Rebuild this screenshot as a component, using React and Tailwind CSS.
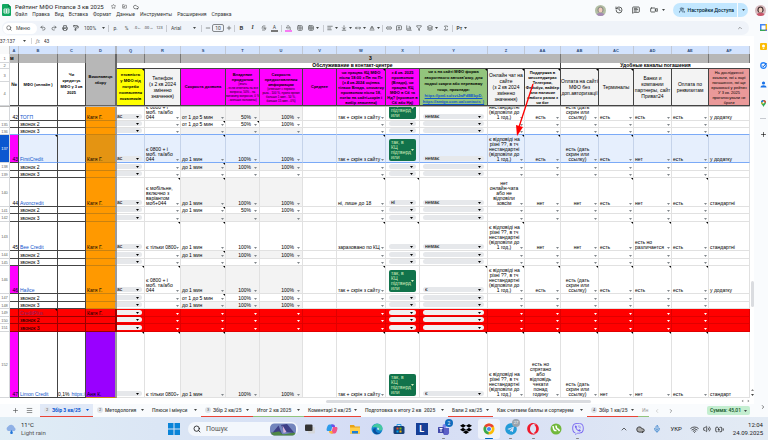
import {
  Undo2, Redo2, Printer, PaintRoller, Search, Star, FolderInput, Cloud, History,
  MessageSquareText, Video, Users, Strikethrough, PaintBucket, Grid2x2, TableCellsMerge,
  AlignLeft, ArrowDownToLine, MoveHorizontal, Baseline, Link2, MessageSquarePlus,
  ChartColumn, Funnel, Layers, Sigma, Minus, Plus, ChevronUp, ChevronLeft, ChevronRight,
  Menu, Mic, Wifi, Volume2, BatteryCharging,
} from "lucide-react";
import { FaDropbox, FaOpera, FaViber, FaTelegram } from "react-icons/fa";

const Caret = ({ className = "text-[#444746]" }) => (
  <svg viewBox="0 0 6 4" aria-hidden="true" className={`h-[2px] w-[3px] shrink-0 ${className}`}>
    <path d="M0 0h6L3 4z" fill="currentColor" />
  </svg>
);

const Note = () => (
  <i className="absolute right-0 top-0 border-l-2 border-t-2 border-l-transparent border-t-black" />
);

/* ---------- document header ---------- */

const menus = ["Файл", "Правка", "Вид", "Вставка", "Формат", "Данные", "Инструменты", "Расширения", "Справка"];

function Avatar({ hair, shirt }) {
  return (
    <svg viewBox="0 0 22 22" className="size-[11px] shrink-0">
      <clipPath id={`av${shirt.slice(1)}`}><circle cx="11" cy="11" r="11" /></clipPath>
      <g clipPath={`url(#av${shirt.slice(1)})`}>
        <rect width="22" height="22" fill={hair === "#8d8b86" ? "#b3bfa4" : "#d6b9bd"} />
        <path d="M5 12C3 0 19 0 17 12l-2 3H7z" fill={hair} />
        <ellipse cx="11" cy="10" rx="4" ry="5" fill="#f0cdbd" />
        <path d="M2 22c1-9 17-9 18 0z" fill={shirt} />
      </g>
    </svg>
  );
}

function DocHeader() {
  return (
    <header className="flex h-5 items-start">
      <svg viewBox="0 0 18 24" className="ml-[2px] mt-1 h-3 w-[9px] shrink-0">
        <path d="M2 0h10l6 6v16a2 2 0 0 1-2 2H2a2 2 0 0 1-2-2V2a2 2 0 0 1 2-2z" fill="#11a861" />
        <path d="M12 0l6 6h-6z" fill="#0b7f48" />
        <path d="M4 10h10v8H4zM4 14h10M9 10v8" fill="none" stroke="#fff" strokeWidth="1.6" />
      </svg>
      <div className="ml-1 mt-[2px]">
        <div className="flex items-center text-[#1f1f1f]">
          <h1 className="whitespace-nowrap text-[6px] leading-[9px]">Рейтинг МФО Finance 3 кв 2025</h1>
          <button aria-label="В избранное" className="ml-[7px]"><Star className="size-[5px]" /></button>
          <button aria-label="Переместить" className="ml-[6px]"><FolderInput className="size-[5px]" /></button>
          <button aria-label="Сохранено" className="ml-[6px]"><Cloud className="size-[6px]" /></button>
        </div>
        <nav className="flex gap-[5px] text-[5px] leading-[7px] text-[#333]">
          {menus.map((m) => <button key={m}>{m}</button>)}
        </nav>
      </div>
      <div className="ml-auto mr-[2px] mt-[3px] flex items-center text-[#444746]">
        <Avatar hair="#8d8b86" shirt="#a58bb5" />
        <button aria-label="История" className="ml-[9px]"><History className="size-2" strokeWidth={2.5} /></button>
        <button aria-label="Комментарии" className="ml-[9px]"><MessageSquareText className="size-2" strokeWidth={2.5} /></button>
        <button aria-label="Встреча" className="ml-[10px] flex items-center gap-[4px]"><Video className="size-2" strokeWidth={2.5} /><Caret /></button>
        <button className="ml-[8px] flex h-[14px] items-center gap-[3px] rounded-l-full bg-[#c2e7ff] pl-[6px] pr-[3px] text-[5px] font-medium text-[#001d35]">
          <Users className="size-[6px]" />
          <span className="whitespace-nowrap">Настройки Доступа</span>
        </button>
        <button aria-label="Ещё" className="ml-px flex h-[14px] w-[10px] items-center justify-center rounded-r-full bg-[#c2e7ff]"><Caret /></button>
        <span className="ml-[7px] flex"><Avatar hair="#3b2a2a" shirt="#c9566a" /></span>
      </div>
    </header>
  );
}

/* ---------- toolbar ---------- */

const Sep = () => <span className="flex w-[3px] shrink-0 justify-center"><i className="h-[7px] w-px bg-[#c7cad0]" /></span>;

function Tool({ icon: Icon, label, w = "w-[11px]", caret, children }) {
  return (
    <button aria-label={label} className={`flex shrink-0 items-center justify-center gap-[2px] ${w}`}>
      {Icon ? <Icon className="size-[6px]" strokeWidth={2.5} /> : children}
      {caret && <Caret />}
    </button>
  );
}

function Toolbar() {
  return (
    <div className="ml-[2px] mr-[5px] mt-px flex h-[14px] items-center rounded-full bg-[#eff3f9] text-[5px] text-[#444746]">
      <button className="ml-px flex h-[11px] w-[34px] shrink-0 items-center gap-[4px] rounded-full bg-white pl-[3px]">
        <Search className="size-[6px]" strokeWidth={2.5} />Меню
      </button>
      <Tool icon={Undo2} label="Отменить" />
      <Tool icon={Redo2} label="Повторить" />
      <Tool icon={Printer} label="Печать" />
      <Tool icon={PaintRoller} label="Копировать формат" />
      <label className="flex w-[26px] shrink-0 items-center pl-[3px]">
        <select aria-label="Масштаб" className="w-[18px] appearance-none"><option>100%</option></select>
        <Caret />
      </label>
      <Sep />
      <Tool label="Денежный">р.</Tool>
      <Tool label="Процент">%</Tool>
      <Tool label="Меньше знаков"><span className="text-[4px]">.0←</span></Tool>
      <Tool label="Больше знаков"><span className="text-[4px]">.00→</span></Tool>
      <Tool label="Форматы"><span className="text-[4px]">123</span></Tool>
      <Sep />
      <label className="flex w-8 shrink-0 items-center pl-[3px]">
        <select aria-label="Шрифт" className="w-[22px] appearance-none"><option>Arial</option></select>
        <Caret />
      </label>
      <Sep />
      <Tool icon={Minus} label="Уменьшить" w="w-[9px]" />
      <input aria-label="Размер шрифта" defaultValue="10" className="h-2 w-3 shrink-0 rounded-[2px] border border-[#85888c] text-center" />
      <Tool icon={Plus} label="Увеличить" w="w-[9px]" />
      <Sep />
      <Tool label="Полужирный"><b className="text-[6px]">B</b></Tool>
      <Tool label="Курсив"><i className="font-serif text-[6px] font-bold">I</i></Tool>
      <Tool icon={Strikethrough} label="Зачеркнутый" />
      <Tool label="Цвет текста"><span className="border-b-2 border-[#777] px-[2px] leading-[5px]">A</span></Tool>
      <Sep />
      <Tool label="Цвет заливки"><span className="border-b-2 border-[#f77cf3] px-px"><PaintBucket className="size-[5px]" /></span></Tool>
      <Tool icon={Grid2x2} label="Границы" />
      <Tool icon={TableCellsMerge} label="Объединить" w="w-[17px]" caret />
      <Sep />
      <Tool icon={AlignLeft} label="По горизонтали" w="w-[14px]" caret />
      <Tool icon={ArrowDownToLine} label="По вертикали" w="w-[14px]" caret />
      <Tool icon={MoveHorizontal} label="Перенос" w="w-[14px]" caret />
      <Tool icon={Baseline} label="Поворот" w="w-[14px]" caret />
      <Sep />
      <Tool icon={Link2} label="Ссылка" w="w-[10px]" />
      <Tool icon={MessageSquarePlus} label="Комментарий" w="w-[10px]" />
      <Tool icon={ChartColumn} label="Диаграмма" w="w-[10px]" />
      <Tool icon={Funnel} label="Фильтр" w="w-[10px]" />
      <Tool icon={Layers} label="Представления" w="w-4" caret />
      <Tool icon={Sigma} label="Функции" />
      <Sep />
      <Tool label="Ввод" w="w-4" caret><b>Рт</b></Tool>
      <button aria-label="Свернуть" className="ml-auto mr-[6px]"><ChevronUp className="size-[6px]" /></button>
    </div>
  );
}

function FormulaBar() {
  return (
    <div className="mt-px flex h-[10px] items-center bg-white text-[5px] text-[#333]">
      <input aria-label="Диапазон" defaultValue="137:137" className="-ml-[3px] w-[26px]" />
      <Caret />
      <i className="ml-[5px] h-[6px] w-px bg-[#d5d7da]" />
      <i className="ml-1 font-serif text-[#888]">fx</i>
      <input aria-label="Формула" defaultValue="43" className="ml-[4px] min-w-0 flex-1" />
    </div>
  );
}

/* ---------- sheet ---------- */

const columns = [
  ["A", "w-[9px]"], ["B", "w-[39px]"], ["C", "w-[28px]"], ["D", "w-[31px]"], ["Q", "w-[28px]"],
  ["R", "w-[36px]"], ["S", "w-[45px]"], ["T", "w-[34px]"], ["U", "w-[43px]"], ["V", "w-[34px]"],
  ["W", "w-[49px]"], ["X", "w-[34px]"], ["Y", "w-[68px]"], ["Z", "w-[37px]"], ["AA", "w-[36px]"],
  ["AB", "w-[38px]"], ["AC", "w-[35px]"], ["AD", "w-[38px]"], ["AE", "w-[37px]"], ["AF", ""],
];

const answer = "є відповіді на\nрізні ??, в тч\nнестандартні\n(відповіли до\n1 год.)";
const yes = "так, в\nКЦ\nпідтверд\nили";
const link = "есть (дать\nскрин или\nссылку)";
const tel = "є 0800 + і\nмоб. та/або\n044";
const withShot = "так + скрін з сайту";

const rows = [
  { n: "", h: "h-[13px]", A: "42", B: "ТОГП", D: "Катя Г.", Q: "ас", R: tel, S: "от 1 до 5 мин", T: "50%", U: "100%", W: withShot, X: "КЦ\nпідтверд\nили", Y: "немає", Z: "нестандартні\n(відповіли до\n1 год.)", AA: "есть", AB: link, AC: "есть", AD: "есть", AE: "есть", AF: "у додатку", gray: 1 },
  { n: "135", h: "h-[6px]", B: "звонок 2", S: "от 1 до 5 мин", T: "50%", U: "100%", notes: "S T" },
  { n: "136", h: "h-[6px]", B: "звонок 3", gray: 1 },
  { n: "137", h: "h-[27px]", A: "43", B: "FirstCredit", D: "Катя Г.", Q: "ас", R: tel, S: "до 1 мин", T: "100%", U: "100%", W: withShot, X: yes, Y: "немає", Z: answer, AA: "есть", AB: link, AC: "есть", AD: "нет", AE: "есть", AF: "у додатку", pink: 1, sel: 1, notes: "B S W Z AA AB AC AE" },
  { n: "138", h: "h-[7px]", B: "звонок 2", S: "до 1 мин", T: "100%", U: "100%", gray: 1, notes: "S" },
  { n: "139", h: "h-[6px]", B: "звонок 3" },
  { n: "140", h: "h-[28px]", A: "44", B: "Avonсredit", D: "Катя Г.", Q: "ас", R: "є мобільне,\nвключно з\nваріантом\nмоб+044", S: "до 1 мин", T: "100%", U: "100%", W: "ні, лише до 18", X: "ні", Y: "немає", Z: "нет\nонлайн-чата\nабо не\nвідповіли\nзовсім", AA: "нет", AB: "нет", AC: "есть", AD: "нет", AE: "есть", AF: "стандартні", gray: 1, notes: "R S W X AC AE" },
  { n: "141", h: "h-[6px]", B: "звонок 2", S: "до 1 мин", T: "50%", U: "100%", notes: "S" },
  { n: "142", h: "h-[7px]", B: "звонок 3", gray: 1 },
  { n: "143", h: "h-[28px]", A: "45", B: "Bee Credit", D: "Катя Г.", Q: "ас", R: "є тільки 0800", S: "до 1 мин", T: "100%", U: "100%", W: "зараховано по КЦ", Y: "немає", Z: answer, AA: "нет", AB: "нет", AC: "есть", AD: "есть но\nразличается", AE: "есть", AF: "стандартні", notes: "R S W X Z AC AD AE" },
  { n: "144", h: "h-[7px]", B: "звонок 2", S: "до 1 мин", T: "100%", U: "100%", gray: 1, notes: "S" },
  { n: "145", h: "h-[6px]", B: "звонок 3" },
  { n: "146", h: "h-[27px]", A: "46", B: "Найсе", D: "Катя Г.", Q: "ас", R: tel, S: "до 1 мин", T: "100%", U: "100%", W: withShot, X: yes, Y: "є", Z: answer, AA: "есть", AB: link, AC: "есть", AD: "есть", AE: "есть", AF: "у додатку", gray: 1, pink: 1, notes: "Q R S W Y Z AA AB AC AD AE" },
  { n: "147", h: "h-[7px]", B: "звонок 2", S: "от 1 до 5 мин", T: "100%", U: "100%", notes: "S" },
  { n: "148", h: "h-[6px]", B: "звонок 3", S: "до 1 мин", T: "100%", U: "100%", gray: 1 },
  { n: "149", h: "h-[7px]", B: "CreditPlus", D: "Катя Г.", red: 1, notes: "B", linked: 1 },
  { n: "150", h: "h-[6px]", B: "звонок 2", red: 1 },
  { n: "151", h: "h-[7px]", B: "звонок 3", red: 1 },
  { n: "152", h: "h-[65px]", A: "47", B: "Limon Credit", C: "0,1%", D: "Аня К.", Q: " ", R: "є тільки 0800", S: "до 1 мин", T: "100%", U: "100%", W: withShot, X: yes, Y: "є", Z: answer, AA: "есть но\nспрятано\nабо\nвідповідь\nчекати\nпонад\nгодину", AB: link, AC: "нет", AD: "нет", AE: "есть", AF: "стандарт", gray: 1, pink: 1, violet: 1, notes: "Q R S W X Y Z AA AB AC AD AE" },
];

const centered = ["Z", "AA", "AB"];
const frozenCols = ["A", "B", "C", "D"];

function fill(row, col) {
  if (row.red) return "bg-[#ff0000]";
  if (col === "A" && row.pink) return "bg-[#ff00ff]";
  if (col === "D") return row.violet ? "bg-[#9900ff]" : row.sel ? "bg-[#e49412]" : "bg-[#ff9900]";
  if (row.sel) return "bg-[#e6effd]";
  if (row.gray && (col === "S" || col === "T" || col === "U")) return "bg-[#f3f3f3]";
  return "bg-white";
}

function Chip({ row, col, value }) {
  if (value.includes("підтверд")) {
    return (
      <button className={`mx-[3px] mb-px flex w-full items-end justify-between bg-[#11734b] px-[2px] pb-px text-left text-[#d4edbc] ${value === yes ? "h-[22px] rounded-[2px]" : "h-3 rounded-b-[2px]"}`}>
        <span className="whitespace-pre">{value}</span>
        <Caret className="-ml-1 mb-[9px] text-[#d4edbc]" />
      </button>
    );
  }
  const bg = row.red ? "bg-[#f1f1f1]" : "bg-[#e6e8eb]";
  return (
    <span className={`mb-px flex h-[5px] w-full items-center pr-[3px] ${bg} ${col === "Q" ? "mr-[2px] rounded-r-full" : "mx-[3px] rounded-full pl-[2px]"}`}>
      <select aria-label={`${col}${row.n}`} className="h-[5px] min-w-0 flex-1 appearance-none leading-[5px]">
        <option>{value}</option>
      </select>
      <Caret className="text-black" />
    </span>
  );
}

function CellBody({ row, col }) {
  const value = row[col] || "";
  if (col === "Q" || col === "X" || col === "Y") return <Chip row={row} col={col} value={value} />;
  if (col === "A") return <span className="w-full text-right">{value}</span>;
  if (col === "B") {
    return row.A || row.linked
      ? <a href="#site" className={`pl-px underline ${row.red ? "text-[#85206a]" : "text-[#1155cc]"}`}>{value}</a>
      : <span className="whitespace-nowrap pl-px">{value}</span>;
  }
  if (col === "C") return value && <span className="flex gap-[2px]">{value}<a href="#rate" className="text-[#1155cc] underline">https://</a></span>;
  if (col === "D" || col === "V" || col === "AF") return <span className="whitespace-nowrap pl-px">{value}</span>;
  const align = centered.includes(col) ? "text-center" : col === "T" || col === "U" ? "text-right" : "text-left";
  return (
    <>
      <span className={`min-w-0 flex-1 whitespace-pre pl-px ${align}`}>{value}</span>
      <button aria-label={`Список ${col}${row.n}`} className={`flex h-[5px] shrink-0 items-center justify-center ${align === "text-right" ? "w-2" : "w-[5px]"}`}>
        <Caret className={row.red ? "text-white" : "text-[#80868b]"} />
      </button>
    </>
  );
}

function SheetRow({ row }) {
  const notes = (row.notes || "").split(" ");
  return (
    <tr>
      <th className={`overflow-hidden border-b border-r border-[#d5d7da] p-0 text-[4px] font-normal leading-[5px] ${row.sel ? "bg-[#0b57d0] text-white" : "bg-white text-[#666]"}`}>{row.n}</th>
      {columns.map(([col]) => {
        const frozen = frozenCols.includes(col);
        let line = "border-[#e1e1e1]";
        if (frozen) line = col === "D" ? "border-b-[#c98210] border-r-[#9a9a9a]" : "border-[#444]";
        if (row.red) line = frozen ? "border-[#900]" : "border-[#e00000]";
        if (row.sel && col !== "A" && col !== "D") line = frozen ? "border-r-[#444] border-b-[#7baaf7]" : "border-r-[#c5d3ea] border-b-[#7baaf7]";
        if (row.n === "136" && col !== "D") line = frozen ? "border-r-[#444] border-b-[#7baaf7]" : "border-r-[#e1e1e1] border-b-[#7baaf7]";
        return (
          <td key={col} className={`relative overflow-hidden border-b p-0 ${col === "D" ? "border-r-2" : "border-r"} ${line} ${fill(row, col)}`}>
            <div className={`flex items-end overflow-hidden ${row.h}`}><CellBody row={row} col={col} /></div>
            {notes.includes(col) && <Note />}
          </td>
        );
      })}
    </tr>
  );
}

const pink = "bg-[#ff00ff]";
const pale = "bg-[#f3f3f3]";
const tinyA = "(знать\n- если ответила на все\nвопросы, 50% - на\nполовину вопросов, 0 %\n- меньше половины)";
const tinyB = "(отвечает с первого\nраза - 100 %, нужно время\nбольше 1 мин - 50 %,\nбольше 15 мин - 0%)";

const normal = "text-[5px] leading-[6px] font-normal";
const strong = "text-[4px] leading-[6px] font-bold";
const dense = "text-[4px] leading-[5px] font-bold";

const heads = [
  { c: "Q", bg: "bg-[#ffff00]", s: strong, t: "птовність\nу МФО під\nпотреби\nпозначення\nпоказників", note: 1 },
  { c: "R", bg: pale, s: normal, t: "Телефон\n(з 2 кв 2024\nзмінено\nзначення)" },
  { c: "S", bg: pink, s: strong, t: "Скорость дозвона" },
  { c: "T", bg: pink, s: dense, t: "Владение\nпродуктом", tiny: tinyA },
  { c: "U", bg: pink, s: dense, t: "Скорость\nпредоставления\nинформации", tiny: tinyB },
  { c: "V", bg: pink, s: strong, t: "Среднее" },
  { c: "W", bg: pink, s: dense, t: "чи працює КЦ МФО\nпісля 18:00 з Пн по Пт\n(з 4 кв.2024 оцінює\nтільки Влада, спочатку\nпрозвоном після 18,\nпотім на сайті+скрін і\nвибір значення)", note: 1 },
  { c: "X", bg: pink, s: dense, t: "з 4 кв. 2025\nпрозвоном\n(Влада), чи\nпрацює КЦ\nМФО в Сб та\nНд? (прозвон в\nСб або Нд)" },
  { c: "Y", bg: "bg-[#93c47d]", s: strong, t: "чи є на сайті МФО форма\nзворотнього автозв'язку, для\nподачі скарги або перевовму\nтощо, приклади:", links: ["https://pml.su/svtJwFdBEbpD,", "https://amigo.com.ua/contacts  )"], note: 1 },
  { c: "Z", bg: pale, s: normal, t: "Онлайн чат на\nсайте\n(з 2 кв 2024\nзмінено\nзначення)", note: 1 },
  { c: "AA", bg: pale, s: dense, t: "Поддержка в\nмессенджерах\nТелеграм,\nФейсбук, вайбер\nили наличие\nлюбого разом з\nчи бот", note: 1 },
  { c: "AB", bg: pale, s: normal, t: "Оплата на сайті\nМФО без\nдоп.авторизації", note: 1 },
  { c: "AC", bg: pale, s: normal, t: "Терминалы", note: 1 },
  { c: "AD", bg: pale, s: normal, t: "Банки и\nкомпании\nпартнеры, сайт\nПриват24" },
  { c: "AE", bg: pale, s: normal, t: "Оплата по\nреквизитам" },
  { c: "AF", bg: "bg-[#ea9999]", s: "text-[4px] leading-[5px] font-normal", t: "На дослідженні\nвказати, які є варі\nпогашення, які ще\nвраховані у рейтин\nУ 3 кв. 2025\nпроголосували не\nбрати" },
];

function HeadCell({ head }) {
  return (
    <th rowSpan={2} className={`relative overflow-hidden border-b border-r border-[#444] p-0 ${head.bg}`}>
      <div className={`flex h-9 flex-col items-center justify-center overflow-hidden whitespace-pre ${head.s}`}>
        <span>{head.t}</span>
        {head.tiny && <span className="text-[3px] font-normal leading-[4px]">{head.tiny}</span>}
        {head.links && head.links.map((l) => <a key={l} href="#form" className="text-[#1155cc] underline">{l}</a>)}
      </div>
      {head.note && <Note />}
    </th>
  );
}

function Sheet() {
  const num = "border-b border-r border-[#d5d7da] bg-white p-0 text-[4px] font-normal leading-[5px] text-[#666]";
  const top = "border-r border-[#777] bg-[#b7b7b7] p-0";
  const frozenHead = "border-b border-r border-[#444] bg-white p-0";
  return (
    <div className="relative min-w-0 flex-1 overflow-hidden">
      <table className="w-full table-fixed border-separate border-spacing-0 bg-white font-['Liberation_Sans',sans-serif] text-[5px] leading-[5px] text-black">
        <colgroup>
          <col className="w-[10px]" />
          {columns.map(([c, w]) => <col key={c} className={w} />)}
        </colgroup>
        <thead>
          <tr>
            <th className="h-2 border-r border-[#c7c7c7] bg-[#f8f9fa] p-0" />
            {columns.map(([c]) => (
              <th key={c} className={`h-2 bg-[#d3e3fd] p-0 text-[4px] text-[#2b4a78] ${c === "D" ? "border-r-2 border-[#b0b5bd]" : "border-r border-[#c0c8d6]"}`}>{c}</th>
            ))}
          </tr>
          <tr>
            <th className={`h-[9px] ${num}`}>1</th>
            <th className={`${top} text-left`}>м</th>
            <th className={top} />
            <th className={top} />
            <th rowSpan={4} className="overflow-hidden border-b border-r-2 border-[#666] bg-[#b7b7b7] p-0 text-[4px] leading-[6px]">Виконавець<br />збору</th>
            <th className={top} />
            <th className={top} />
            <th colSpan={9} className={top}>3</th>
            <th colSpan={4} className={top} />
            <th className={top} />
          </tr>
          <tr>
            <th className={`h-[6px] ${num}`}>2</th>
            <th rowSpan={3} className={frozenHead}>№</th>
            <th rowSpan={3} className={`whitespace-nowrap text-[4px] ${frozenHead}`}>МФО (онлайн )</th>
            <th rowSpan={3} className={`whitespace-nowrap text-[4px] leading-[6px] ${frozenHead}`}>Чи<br />кредитує<br />МФО у 3 кв<br />2025</th>
            <th className="border-b border-[#444] p-0" />
            <th colSpan={10} className="border-b border-r border-[#444] p-0">Обслуживание в контакт-центре</th>
            <th colSpan={5} className="border-b border-[#444] p-0">Удобные каналы погашения</th>
          </tr>
          <tr>
            <th className={`h-[13px] ${num}`}>3</th>
            {heads.map((h) => <HeadCell key={h.c} head={h} />)}
          </tr>
          <tr><th className={`h-6 ${num}`}>4</th></tr>
          <tr><td colSpan={21} className="h-px bg-[#b7b7b7] p-0" /></tr>
        </thead>
        <tbody>
          {rows.map((row, i) => <SheetRow key={i} row={row} />)}
        </tbody>
      </table>
      {/* red pointer drawn over the sheet */}
      <svg viewBox="0 0 20 54" className="absolute left-[515px] top-[37px] h-[54px] w-5">
        <path d="M18 1 4 44" stroke="#f00" strokeWidth="1.3" />
        <path d="M2 53 1 42 8 44z" fill="#f00" />
      </svg>
    </div>
  );
}

function Scrollbar() {
  return (
    <div className="flex w-1 shrink-0 flex-col items-center bg-white">
      <i className="mt-[235px] h-[26px] w-[3px] rounded-full bg-[#dadce0]" />
      <span className="mt-auto flex flex-col gap-[3px] pb-[2px] text-[#888]">
        <Caret className="rotate-180" /><Caret />
      </span>
    </div>
  );
}

/* ---------- sheet tabs ---------- */

const tabs = [
  { t: "Збір 3 кв/25", n: 2, w: "w-[53px]", c: "border-[#ea4335]", active: 1 },
  { t: "Методология", n: 2, w: "w-[55px]" },
  { t: "Плюси і мінуси", w: "w-[53px]" },
  { t: "Збір 2 кв/25", n: 3, w: "w-[52px]", c: "border-[#ea4335]" },
  { t: "Итог 2 кв 2025", w: "w-[51px]", c: "border-[#93c47d]" },
  { t: "Коментарі 2 кв/25", w: "w-[57px]", c: "border-[#ea4335]" },
  { t: "Подготовка к итогу 2 кв  2025", w: "w-[87px]" },
  { t: "Бали 2 кв/25", w: "w-[45px]", c: "border-[#ea4335]" },
  { t: "Как считаем баллы и сортируем", w: "w-[94px]" },
  { t: "Збір 1 кв/25", n: 4, w: "w-[51px]", c: "border-[#ea4335]" },
];

function SheetTabs() {
  return (
    <div className="flex h-[13px] items-center bg-[#f9fbfd] text-[5px] text-[#444746]">
      <button aria-label="Добавить лист" className="ml-3"><Plus className="size-[7px]" /></button>
      <button aria-label="Все листы" className="ml-[7px] mr-[7px]"><Menu className="size-[7px]" /></button>
      {tabs.map((tab) => (
        <button key={tab.t} className={`flex h-[13px] shrink-0 items-center gap-[2px] border-b px-1 ${tab.w} ${tab.c || "border-transparent"} ${tab.active ? "bg-[#e1e9f7] font-bold text-[#0b57d0]" : "font-medium"}`}>
          {tab.n && <i className="flex size-[6px] shrink-0 items-center justify-center rounded-full bg-[#dfe3ea] text-[4px] font-normal not-italic text-[#444]">{tab.n}</i>}
          <span className="whitespace-pre">{tab.t}</span>
          <Caret className="ml-auto" />
        </button>
      ))}
      <button className="h-[13px] w-[11px] shrink-0 overflow-hidden whitespace-nowrap border-b border-[#93c47d] pl-1 text-left text-[#999]">Ин</button>
      <button aria-label="Назад" className="ml-[5px] text-[#aaa]"><ChevronLeft className="size-[6px]" /></button>
      <button aria-label="Вперёд" className="ml-2"><ChevronRight className="size-[6px]" /></button>
      <button className="ml-auto mr-1 flex h-[9px] w-[43px] shrink-0 items-center justify-center gap-[3px] rounded-[2px] bg-[#c4eed0] font-medium text-[#0f5223]">
        Сумма: 45,01 <Caret />
      </button>
    </div>
  );
}

/* ---------- side panel ---------- */

function SidePanel() {
  return (
    <aside className="flex w-[14px] shrink-0 flex-col items-center pl-1">
      <svg viewBox="0 0 14 14" className="mt-1 size-[7px]">
        <path d="M0 0h14v14H0z" fill="#4285f4" /><path d="M11 0h3v11h-3z" fill="#fbbc04" /><path d="M0 11h11v3H0z" fill="#34a853" />
        <path d="M11 11h3l-3 3z" fill="#ea4335" /><path d="M3 3h8v8H3z" fill="#fff" />
      </svg>
      <svg viewBox="0 0 14 14" className="mt-3 size-[7px]">
        <rect width="14" height="14" rx="2" fill="#fbbc04" /><circle cx="7" cy="6" r="3" fill="#fff" /><path d="M5.500 10h3v1.500h-3z" fill="#fff" />
      </svg>
      <svg viewBox="0 0 14 14" className="mt-3 size-[7px]">
        <circle cx="7" cy="7" r="5.500" fill="none" stroke="#2684fc" strokeWidth="2.600" /><path d="M4 7l2.500 2.500L13 2" fill="none" stroke="#0057cc" strokeWidth="2" />
      </svg>
      <svg viewBox="0 0 14 14" className="mt-3 size-[7px]">
        <circle cx="7" cy="4" r="3.200" fill="#1a73e8" /><path d="M1 13c0-6 12-6 12 0z" fill="#1a73e8" />
      </svg>
      <svg viewBox="0 0 14 14" className="mt-3 size-[7px]">
        <path d="M7 14C6 10 2 9 2 5a5 5 0 0 1 10 0c0 4-4 5-5 9z" fill="#34a853" /><path d="M2 5a5 5 0 0 1 5-5v5z" fill="#1a73e8" />
        <path d="M7 0a5 5 0 0 1 5 5H7z" fill="#ea4335" /><path d="M2 5h5l-3 4z" fill="#fbbc04" /><circle cx="7" cy="5" r="1.800" fill="#fff" />
      </svg>
      <i className="mt-[11px] h-px w-[6px] bg-[#c7cad0]" />
      <button aria-label="Дополнения" className="mt-3"><Plus className="size-[7px]" /></button>
      <button aria-label="Показать панель" className="mb-[7px] mt-auto"><ChevronRight className="size-[6px]" /></button>
    </aside>
  );
}

/* ---------- windows taskbar ---------- */

const Svg = ({ children }) => <svg viewBox="0 0 24 24" className="size-3">{children}</svg>;

const apps = [
  ["Представление задач", <Svg><rect x="8" y="8" width="14" height="13" rx="2" fill="#d5d7da" /><rect x="2" y="3" width="15" height="13" rx="2" fill="#333" /></Svg>],
  ["Copilot", <Svg><path d="M7 3h7l-4 13H4c-4 0-3-4-2-7s2-6 5-6z" fill="#2c9bea" /><path d="M17 21h-7l4-13h6c4 0 3 4 2 7s-2 6-5 6z" fill="#f0568b" /><path d="M10 3h5c2 0 3 2 3 5h-6z" fill="#6a4de8" /><path d="M14 21H9c-2 0-3-2-3-5h6z" fill="#f9b731" /></Svg>],
  ["Проводник", <Svg><path d="M2 4h8l2 3h10v14H2z" fill="#e8a317" /><path d="M2 9h20v12H2z" fill="#ffcf4a" /><path d="M6 16h12v5H6z" fill="#1c7ed6" /></Svg>],
  ["Edge", <Svg><circle cx="12" cy="12" r="11" fill="#1284cf" /><path d="M2 9C5-2 23-1 23 11c0 5-7 5-8 3 2-5-6-8-13-5z" fill="#45c9a0" /><path d="M10 11c-3 6 3 11 10 8-8 7-16 2-16-4 0-3 3-5 6-4z" fill="#0a4e9b" /><path d="M15 14c-3 0-3-4-1-5 2 2 2 3 1 5z" fill="#fff" /></Svg>],
  ["Store", <Svg><path d="M8 7V3h8v4" fill="none" stroke="#2b9ce6" strokeWidth="2" /><rect x="1" y="6" width="22" height="16" rx="3" fill="#153e78" /><path d="M7 9h4v4H7z" fill="#f25022" /><path d="M13 9h4v4h-4z" fill="#7fba00" /><path d="M7 15h4v4H7z" fill="#00a4ef" /><path d="M13 15h4v4h-4z" fill="#ffb900" /></Svg>],
  ["LINGVO", <span className="flex size-3 items-center justify-center bg-[#173f97] text-[9px] font-bold leading-3 text-white">L</span>],
  ["Teams", <Svg><circle cx="13" cy="6" r="4" fill="#7b83eb" /><path d="M8 10h14v7a6 6 0 0 1-12 3z" fill="#5b5fc7" /><rect x="0" y="8" width="12" height="12" rx="1" fill="#4249ab" /><path d="M3 11h6M6 11v7" stroke="#fff" strokeWidth="2" /></Svg>, 1, "2"],
  ["Dropbox", <FaDropbox className="size-3 text-black" />],
  ["Chrome", <Svg><circle cx="12" cy="12" r="11" fill="#fbbc04" /><path d="M12 12 2.500 6.500a11 11 0 0 1 19 0z" fill="#ea4335" /><path d="M12 12 2.500 6.500A11 11 0 0 0 11 23z" fill="#34a853" /><circle cx="12" cy="12" r="5.500" fill="#fff" /><circle cx="12" cy="12" r="4.200" fill="#4285f4" /></Svg>, 2],
  ["Telegram", <FaTelegram className="size-3 text-[#239bd8]" />, 1, "27"],
  ["Opera", <FaOpera className="size-3 text-[#f01a2c]" />, 1],
  ["uTorrent", <Svg><circle cx="12" cy="12" r="11" fill="#71b83c" /><path d="M6 6c1 8 3 10 7 9M12 5c0 5 2 7 5 8l2 3" fill="none" stroke="#fff" strokeWidth="3" /></Svg>],
  ["Viber", <FaViber className="size-3 text-[#7360f2]" />, 1],
];

function Taskbar() {
  return (
    <footer className="flex h-6 items-center bg-linear-to-r from-[#e0edf5] via-[#d4dcf5] to-[#e3ebf4] text-[6px] text-[#1b1b1b]">
      <svg viewBox="0 0 24 24" className="ml-[5px] size-3 shrink-0">
        <path d="M6 16a5 5 0 0 1 0-9 7 7 0 0 1 13 2 4 4 0 0 1 0 7z" fill="#8fb1e6" /><path d="M13 14c4 5 3 8 0 8s-4-3 0-8z" fill="#2477d9" />
      </svg>
      <div className="ml-1 w-[147px] leading-2">
        <p>11°C</p>
        <p className="text-[#555]">Light rain</p>
      </div>
      <button aria-label="Пуск">
        <svg viewBox="0 0 24 24" className="size-3"><path d="M0 0h11v11H0zM13 0h11v11H13zM0 13h11v11H0zM13 13h11v11H13z" fill="#0a84d8" /></svg>
      </button>
      <label className="ml-2 flex h-[14px] w-[110px] shrink-0 items-center gap-[5px] rounded-full bg-[#f3f7fc] pl-[5px] pr-[2px]">
        <Search className="size-2" strokeWidth={2.5} />
        <input aria-label="Пошук" placeholder="Пошук" className="min-w-0 flex-1 text-[7px] placeholder:text-[#555]" />
        <svg viewBox="0 0 52 26" className="h-[13px] w-[26px] shrink-0">
          <rect y="1" width="52" height="24" rx="9" fill="#7385bd" />
          <path d="M3 22 17 5l7 17zM22 4l12-2 15 18-20-2z" fill="#3d3f86" />
          <path d="M25 5l8 13-6 2z" fill="#d8b5dd" />
          <path d="M2 18c8 4 14-5 20 2s16-2 29 0c-2 6-6 5-9 5H9c-4 0-6-3-7-7z" fill="#4e8745" />
        </svg>
      </label>
      <div className="ml-px flex w-[290px] shrink-0 justify-between">
        {apps.map(([name, icon, state, badge]) => (
          <button key={name} aria-label={name} className={`relative flex h-5 w-[22px] items-center justify-center rounded-[3px] ${state === 2 ? "bg-[#eef2fb]" : ""}`}>
            {icon}
            {state && <i className={`absolute bottom-0 h-px rounded-full ${state === 2 ? "w-2 bg-[#0067c0]" : "w-[3px] bg-[#888]"}`} />}
            {badge && <i className={`absolute right-[2px] top-0 flex size-2 items-center justify-center rounded-full not-italic text-white ${badge === "2" ? "bg-[#0f6cbd] text-[5px]" : "bg-[#9aa3ad] text-[4px]"}`}>{badge}</i>}
          </button>
        ))}
      </div>
      <div className="ml-auto mr-[5px] flex items-center">
        <ChevronUp className="size-2" />
        <Cloud className="ml-[8px] size-[9px] fill-[#aaa]" />
        <Mic className="ml-[8px] size-2 text-[#1a6fc4]" />
        <span className="ml-[9px]">УКР</span>
        <Wifi className="ml-[8px] size-[9px]" />
        <Volume2 className="ml-[4px] size-2" />
        <BatteryCharging className="ml-[4px] size-[9px]" />
        <div className="ml-[9px] text-right leading-2">
          <p>12:04</p>
          <p>24.09.2025</p>
        </div>
      </div>
    </footer>
  );
}

export default function App() {
  return (
    <div className="overflow-hidden bg-[#f9fbfd] font-[Roboto,sans-serif] leading-none">
      <DocHeader />
      <div className="flex">
        <main className="min-w-0 flex-1">
          <Toolbar />
          <FormulaBar />
          <div className="flex">
            <Sheet />
            <Scrollbar />
          </div>
          <div className="flex h-[6px] items-center bg-white">
            <i className="ml-[326px] h-[3px] w-[265px] rounded-full bg-[#dadce0]" />
            <span className="ml-auto mr-1 flex gap-[3px] text-[#888]"><Caret className="rotate-90" /><Caret className="-rotate-90" /></span>
          </div>
          <SheetTabs />
        </main>
        <SidePanel />
      </div>
      <Taskbar />
    </div>
  );
}
